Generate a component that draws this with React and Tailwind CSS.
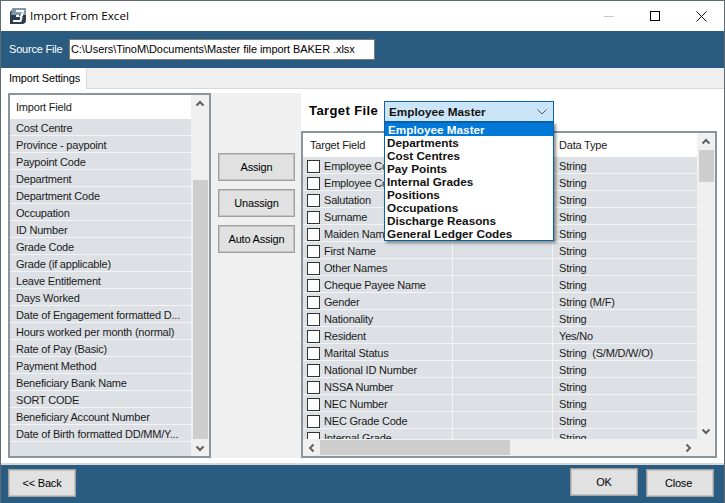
import React from "react";

const F = "font-['Liberation_Sans',sans-serif]";
const importFields = ["Cost Centre","Province - paypoint","Paypoint Code","Department","Department Code","Occupation","ID Number","Grade Code","Grade (if applicable)","Leave Entitlement","Days Worked","Date of Engagement formatted D...","Hours worked per month (normal)","Rate of Pay (Basic)","Payment Method","Beneficiary Bank Name","SORT CODE","Beneficiary Account Number","Date of Birth formatted DD/MM/Y..."];
const targets = [["Employee Code","String"],["Employee Code 2","String"],["Salutation","String"],["Surname","String"],["Maiden Name","String"],["First Name","String"],["Other Names","String"],["Cheque Payee Name","String"],["Gender","String (M/F)"],["Nationality","String"],["Resident","Yes/No"],["Marital Status","String  (S/M/D/W/O)"],["National ID Number","String"],["NSSA Number","String"],["NEC Number","String"],["NEC Grade Code","String"],["Internal Grade","String"]];
const options = ["Departments","Cost Centres","Pay Points","Internal Grades","Positions","Occupations","Discharge Reasons","General Ledger Codes"];

function Arrow({ d }) {
  const paths = { up: "M1.5 6.5 L5 3 L8.5 6.5", down: "M1.5 3.5 L5 7 L8.5 3.5", left: "M6.5 1.5 L3 5 L6.5 8.5", right: "M3.5 1.5 L7 5 L3.5 8.5" };
  return (
    <svg width="10" height="10" viewBox="0 0 10 10" className="shrink-0" fill="none">
      <path d={paths[d]} stroke="#606060" strokeWidth="2" />
    </svg>
  );
}

function Btn({ children, cls }) {
  return (
    <div className={`flex items-center justify-center bg-[#e1e1e1] border border-[#a0a0a0] outline outline-[#c4c4c4] -outline-offset-2 text-black ${cls}`}>{children}</div>
  );
}

function VScroll({ top, h }) {
  return (
    <div className="w-[18px] shrink-0 bg-[#f0f0f0] flex flex-col items-center">
      <div className="h-[17px] w-full flex items-center justify-center shrink-0"><Arrow d="up" /></div>
      <div className="flex-1 w-full flex flex-col">
        <div style={{ height: top }} className="shrink-0" />
        <div style={{ height: h }} className="w-[15px] mx-auto bg-[#cdcdcd] shrink-0" />
      </div>
      <div className="h-[17px] w-full flex items-center justify-center shrink-0"><Arrow d="down" /></div>
    </div>
  );
}

export default function App() {
  return (
    <div className={`${F} w-[725px] h-[503px] overflow-hidden flex flex-col bg-white border-t border-l border-r border-[#5f6b75] text-[11px] tracking-[-0.2px] text-[#1a1a1a]`}>
      {/* title bar */}
      <div className="h-[30px] shrink-0 flex items-center bg-white pl-[8px]">
        <svg width="18" height="18" viewBox="0 0 18 18" className="shrink-0">
          <path d="M3 3 Q3 1 5 1 H17 V13 Q17 17 13 17 H1 V5 Z" fill="#2c3e50" />
          <path d="M3 3 Q3 1 5 1 H17 V8 H2 Z" fill="#8096aa" />
          <path d="M7 4 H14 L13 8.5 L11.5 9.5 L12.5 10.5 L11.5 14 H4 M7 9 H10" fill="none" stroke="#fff" strokeWidth="2" />
        </svg>
        <span className="ml-[3px] text-[11.6px] text-black font-['Open_Sans',sans-serif] tracking-normal">Import From Excel</span>
        <div className="ml-auto flex items-center">
          <div className="w-[46px] flex justify-center"><div className="w-[10px] h-px bg-[#c8c8c8]" /></div>
          <div className="w-[46px] flex justify-center"><div className="w-[10px] h-[10px] border border-black" /></div>
          <div className="w-[46px] flex justify-center">
            <svg width="11" height="11" viewBox="0 0 11 11"><path d="M0.5 0.5 L10.5 10.5 M10.5 0.5 L0.5 10.5" stroke="#111" strokeWidth="1" /></svg>
          </div>
        </div>
      </div>

      {/* source file band */}
      <div className="h-[37px] shrink-0 bg-[#2a5b80] flex items-center pl-[8px]">
        <span className="text-white w-[60px] whitespace-nowrap">Source File</span>
        <div className="h-[21px] w-[306px] bg-white border border-[#7a7a7a] pl-[1px] flex items-center text-black whitespace-nowrap tracking-[-0.07px]">C:\Users\TinoM\Documents\Master file import BAKER .xlsx</div>
      </div>

      {/* tabs */}
      <div className="h-[21px] shrink-0 bg-[#f0f0f0] border-b border-[#d9d9d9] flex">
        <div className="w-[86px] h-[21px] bg-white border-r border-[#d9d9d9] flex items-center pl-[8px] text-black whitespace-nowrap">Import Settings</div>
      </div>

      {/* tab body */}
      <div className="flex-1 min-h-0 bg-white flex pt-[4px] px-[7px] pb-[5px]">
        {/* left list */}
        <div className="w-[203px] shrink-0 border-2 border-[#8a949c] flex bg-[#dde1e5] min-h-0">
          <div className="flex-1 min-w-0 flex flex-col">
            <div className="h-[24px] shrink-0 bg-white flex items-center pl-[6px] text-[#1a1a1a]">Import Field</div>
            {importFields.map((t) => (
              <div key={t} className="h-[17px] shrink-0 border-b border-[#f3f4f5] pt-[2px] flex items-center pl-[6px] whitespace-nowrap overflow-hidden">{t}</div>
            ))}
          </div>
          <VScroll top={68} h={259} />
        </div>

        {/* middle */}
        <div className="w-[90px] shrink-0 bg-[#f0f0f0] flex flex-col items-start pl-[7px] gap-[8px] pt-[60px]">
          <Btn cls="w-[77px] h-[28px]">Assign</Btn>
          <Btn cls="w-[77px] h-[28px]">Unassign</Btn>
          <Btn cls="w-[77px] h-[28px]">Auto Assign</Btn>
        </div>

        {/* right */}
        <div className="flex-1 min-w-0 flex flex-col relative">
          <div className="h-[38px] shrink-0 flex items-start pt-[8px] pl-[8px]">
            <span className="font-bold text-[13px] text-black leading-[20px] w-[75px] tracking-[0.4px] whitespace-nowrap">Target File</span>
            <div className="w-[170px] h-[21px] border border-[#0b62a8] bg-[#cce4f7] flex items-center pl-[4px] font-bold text-[11.75px] tracking-normal text-[#111]">
              Employee Master
              <svg width="10" height="6" viewBox="0 0 10 6" className="ml-auto mr-[6px]"><path d="M0.5 0.5 L5 5 L9.5 0.5" fill="none" stroke="#555" /></svg>
            </div>
          </div>

          {/* dropdown list */}
          <div className="absolute left-[83px] top-[29px] w-[170px] h-[119px] bg-white border border-[#0b62a8] shadow-[2px_2px_3px_rgba(0,0,0,0.45)] z-10 font-bold text-[11.75px] tracking-normal text-[#111] leading-[13px]">
            <div className="h-[13px] bg-[#0078d7] text-white pl-[3px] flex items-center">Employee Master</div>
            {options.map((o) => (
              <div key={o} className="h-[13px] pl-[2px] flex items-center whitespace-nowrap">{o}</div>
            ))}
          </div>

          {/* grid */}
          <div className="flex-1 min-h-0 border-2 border-[#8a949c] flex flex-col bg-[#f0f0f0]">
            <div className="flex-1 min-h-0 flex">
              <div className="flex-1 min-w-0 flex flex-col overflow-hidden">
                <div className="h-[24px] shrink-0 bg-white flex items-center">
                  <div className="w-[250px] pl-[7px]">Target Field</div>
                  <div className="pl-[6px]">Data Type</div>
                </div>
                {targets.map(([a, b]) => (
                  <div key={a} className="h-[17px] shrink-0 bg-[#dde1e5] border-b border-[#f3f4f5] flex items-center">
                    <div className="w-[150px] h-full shrink-0 border-r border-[#f3f4f5] flex items-center pt-[2px] pl-[4px] whitespace-nowrap overflow-hidden">
                      <div className="w-[13px] h-[13px] shrink-0 bg-white border border-[#333] mr-[4px]" />
                      {a}
                    </div>
                    <div className="w-[100px] h-full shrink-0 border-r border-[#f3f4f5]" />
                    <div className="pl-[6px] pt-[2px] whitespace-pre">{b}</div>
                  </div>
                ))}
              </div>
              <VScroll top={0} h={32} />
            </div>
            <div className="h-[17px] shrink-0 flex items-center">
              <div className="w-[17px] flex justify-center shrink-0"><Arrow d="left" /></div>
              <div className="w-[190px] h-[15px] bg-[#cdcdcd] shrink-0" />
              <div className="flex-1" />
              <div className="w-[18px] flex justify-center shrink-0 mr-[18px]"><Arrow d="right" /></div>
            </div>
          </div>
        </div>
      </div>

      {/* footer */}
      <div className="h-[40px] shrink-0 bg-[#2a5b80] border-t-2 border-[#d5d9dc] flex items-start pt-[4px] pl-[7px] pr-[10px]">
        <Btn cls="w-[68px] h-[28px]">&lt;&lt; Back</Btn>
        <Btn cls="w-[68px] h-[28px] ml-auto mr-[8px] -mt-px">OK</Btn>
        <Btn cls="w-[68px] h-[28px] pr-[3px]">Close</Btn>
      </div>
    </div>
  );
}
